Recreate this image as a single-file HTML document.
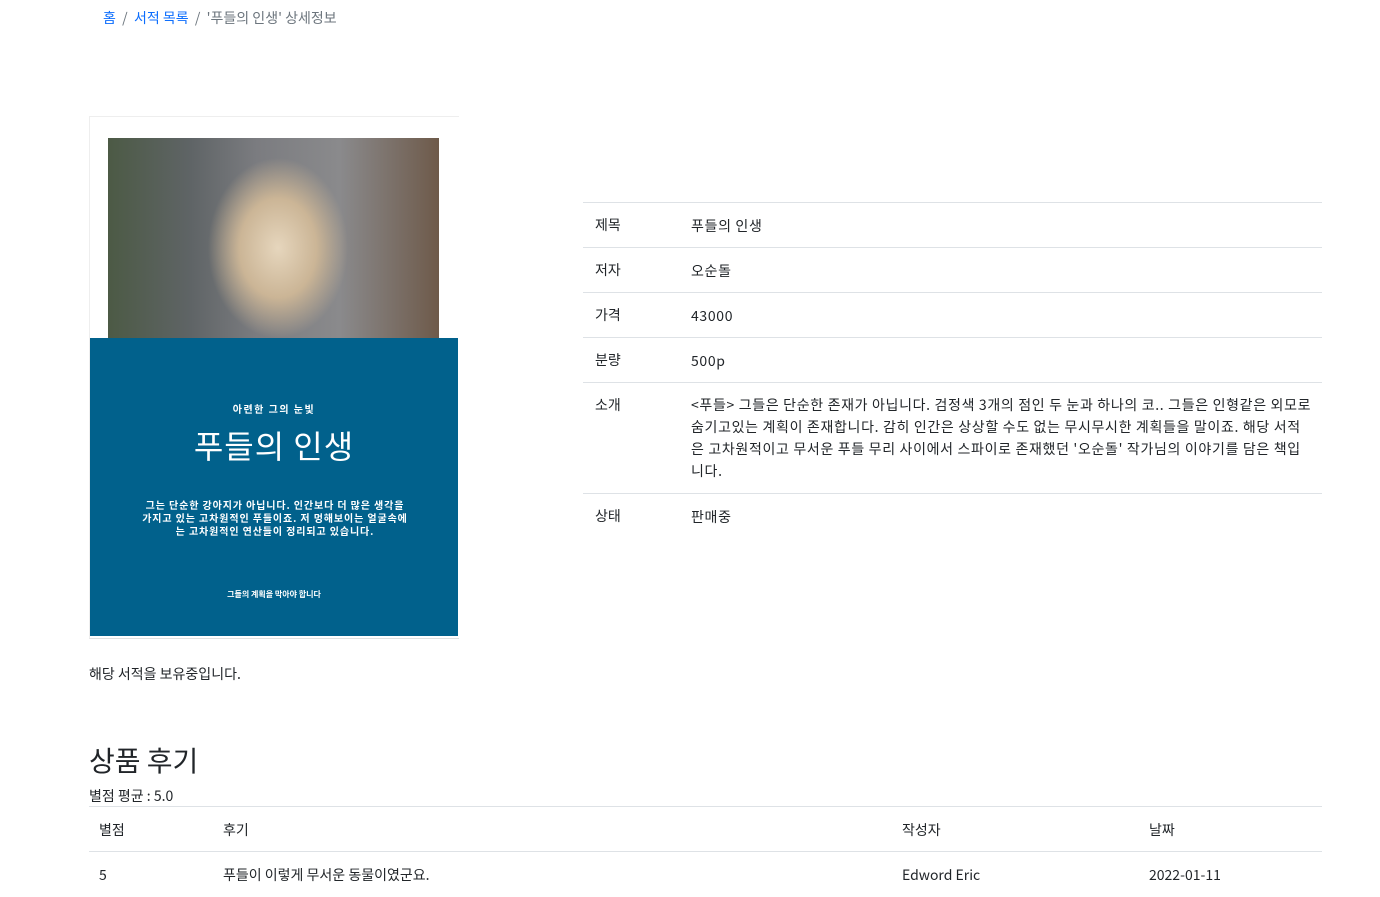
<!DOCTYPE html>
<html><head><meta charset="utf-8"><style>
body{margin:0;background:#fff;font-family:"Noto Sans CJK KR","Liberation Sans",sans-serif;color:#212529;font-size:14px;width:1380px;height:897px;overflow:hidden;position:relative}
.a{position:absolute}
a{color:#0d6efd;text-decoration:none}
.row{position:absolute;left:583px;width:739px;border-top:1px solid #dee2e6}
.row .k{position:absolute;left:12px;top:12px}
.row .v{position:absolute;left:108px;top:12px;width:621px;line-height:22px;letter-spacing:0.66px;word-break:break-all}
.c{position:absolute;color:#fff;text-align:center;font-weight:bold;left:90px;width:368px}
</style></head><body>
<div class="a" style="left:103px;top:8px;font-size:14px"><a>홈</a> <span style="color:#6c757d">&nbsp;/&nbsp;</span> <a>서적 목록</a> <span style="color:#6c757d">&nbsp;/&nbsp;</span> <span style="color:#6c757d">'푸들의 인생' 상세정보</span></div>

<div class="a" style="left:89px;top:116px;width:369px;height:521px;border:1px solid #eee;border-right:none;border-bottom:1px solid #e0e0e0"></div>
<div class="a" style="left:108px;top:138px;width:331px;height:200px;background:radial-gradient(ellipse 70px 90px at 170px 110px,#e6d6bd 0,#cbb596 55%,transparent 100%),linear-gradient(90deg,#4c5a45 0,#5f6466 25%,#7b7c80 45%,#8a8a8c 70%,#6e5a4a 100%)"></div>
<div class="a" style="left:90px;top:338px;width:368px;height:298px;background:#01618c"></div>
<div class="c" style="top:401px;font-size:10px;letter-spacing:1.5px">아련한 그의 눈빛</div>
<div class="c" style="top:422px;font-size:32px;font-weight:normal;letter-spacing:1px">푸들의 인생</div>
<div class="c" style="top:498px;font-size:10px;line-height:13px;left:141px;width:268px;letter-spacing:0.9px;word-break:break-all">그는 단순한 강아지가 아닙니다. 인간보다 더 많은 생각을 가지고 있는 고차원적인 푸들이죠. 저 멍해보이는 얼굴속에는 고차원적인 연산들이 정리되고 있습니다.</div>
<div class="c" style="top:589px;font-size:8px">그들의 계획을 막아야 합니다</div>

<div class="row" style="top:202px"><span class="k">제목</span><span class="v">푸들의 인생</span></div>
<div class="row" style="top:247px"><span class="k">저자</span><span class="v">오순돌</span></div>
<div class="row" style="top:292px"><span class="k">가격</span><span class="v">43000</span></div>
<div class="row" style="top:337px"><span class="k">분량</span><span class="v">500p</span></div>
<div class="row" style="top:382px;height:110px"><span class="k">소개</span><span class="v" style="top:11px">&lt;푸들&gt; 그들은 단순한 존재가 아닙니다. 검정색 3개의 점인 두 눈과 하나의 코.. 그들은 인형같은 외모로 숨기고있는 계획이 존재합니다. 감히 인간은 상상할 수도 없는 무시무시한 계획들을 말이죠. 해당 서적은 고차원적이고 무서운 푸들 무리 사이에서 스파이로 존재했던 '오순돌' 작가님의 이야기를 담은 책입니다.</span></div>
<div class="row" style="top:493px"><span class="k">상태</span><span class="v">판매중</span></div>

<div class="a" style="left:89px;top:664px">해당 서적을 보유중입니다.</div>
<div class="a" style="left:89px;top:740px;font-size:28px">상품 후기</div>
<div class="a" style="left:89px;top:786px">별점 평균 : 5.0</div>
<div class="a" style="left:89px;top:806px;width:1233px;border-top:1px solid #dee2e6"></div>
<div class="a" style="left:89px;top:851px;width:1233px;border-top:1px solid #dee2e6"></div>
<div class="a" style="left:99px;top:820px">별점</div>
<div class="a" style="left:223px;top:820px">후기</div>
<div class="a" style="left:902px;top:820px">작성자</div>
<div class="a" style="left:1149px;top:820px">날짜</div>
<div class="a" style="left:99px;top:865px">5</div>
<div class="a" style="left:223px;top:865px">푸들이 이렇게 무서운 동물이였군요.</div>
<div class="a" style="left:902px;top:865px">Edword Eric</div>
<div class="a" style="left:1149px;top:865px">2022-01-11</div>
</body></html>
